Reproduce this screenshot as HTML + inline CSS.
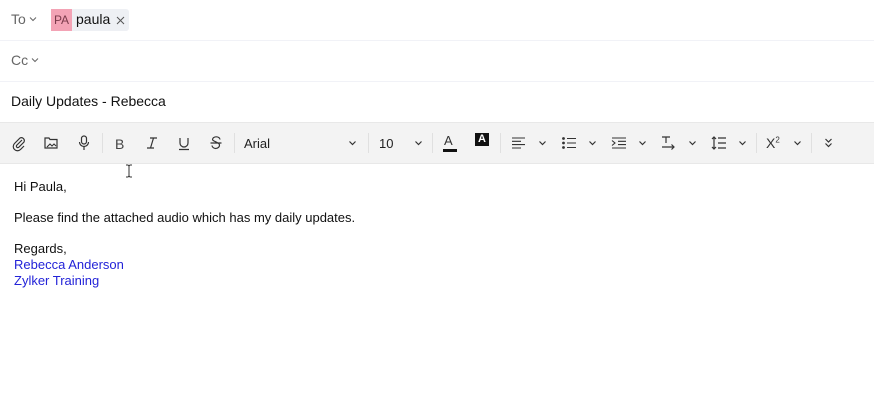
<!DOCTYPE html>
<html><head><meta charset="utf-8"><style>
*{margin:0;padding:0;box-sizing:border-box}
body{width:874px;height:420px;background:#fff;font-family:"Liberation Sans",Arial,sans-serif;position:relative;overflow:hidden;color:#222}
.a{position:absolute;white-space:nowrap}
.lbl{color:#666;font-size:14px}
.line{position:absolute;left:0;width:874px;height:1px;background:#f1f2f7}
.tb{position:absolute;left:0;top:122px;width:874px;height:42px;background:#f3f3f3;border-top:1px solid #e8e8e8;border-bottom:1px solid #e8e8e8}
.sep{position:absolute;top:133px;width:1px;height:20px;background:#e0e0e0}
svg{position:absolute;overflow:visible}
.body{font-size:13px;color:#111}
.blue{color:#2323d8}
</style></head><body>
<div class="a lbl" style="left:11px;top:11px">To</div>
<svg style="left:29px;top:16px" width="8" height="6"><path d="M1 1.5L4 4.5L7 1.5" fill="none" stroke="#666" stroke-width="1"/></svg>
<div class="a" style="left:51px;top:9px;width:78px;height:22px;background:#eef0f4;border-radius:3px"></div>
<div class="a" style="left:51px;top:9px;width:21px;height:22px;background:#f3a3b5;color:#7a3a4a;font-size:12px;line-height:22px;text-align:center">PA</div>
<div class="a" style="left:76px;top:11px;font-size:14px;color:#111">paula</div>
<svg style="left:116px;top:16px" width="9" height="9"><path d="M1 1L8 8M8 1L1 8" stroke="#555" stroke-width="1"/></svg>
<div class="line" style="top:40px"></div>
<div class="a lbl" style="left:11px;top:52px">Cc</div>
<svg style="left:31px;top:57px" width="8" height="6"><path d="M1 1.5L4 4.5L7 1.5" fill="none" stroke="#666" stroke-width="1"/></svg>
<div class="line" style="top:81px"></div>
<div class="a" style="left:11px;top:93px;font-size:14px;color:#111">Daily Updates - Rebecca</div>
<div class="tb"></div>
<svg style="left:12px;top:136px" width="14" height="14"><path d="M10 4L4.5 9.5a1.5 1.5 0 0 0 2 2L12 6a3 3 0 0 0-4-4L2.5 7.5a4.2 4.2 0 0 0 6 6L12 10" fill="none" stroke="#333" stroke-width="1.2"/></svg>
<svg style="left:44px;top:137px" width="14" height="12"><path d="M1 1h4l1 1.5h7V11H1z" fill="none" stroke="#333" stroke-width="1.2"/><path d="M3 10l3-3 2 2 2-2 2 2" fill="none" stroke="#333" stroke-width="1.1"/></svg>
<svg style="left:78px;top:135px" width="12" height="16"><rect x="3.5" y="1" width="5" height="8" rx="2.5" fill="none" stroke="#333" stroke-width="1.2"/><path d="M1.5 7a4.5 4.5 0 0 0 9 0M6 11.5V15" fill="none" stroke="#333" stroke-width="1.2"/></svg>
<div class="sep" style="left:102px"></div>
<div class="a" style="left:115px;top:136px;font-size:14px;color:#444">B</div>
<svg style="left:146px;top:137px" width="12" height="12"><path d="M4 1h7M1 11h7M7.5 1L4.5 11" fill="none" stroke="#333" stroke-width="1.2"/></svg>
<svg style="left:178px;top:137px" width="12" height="13"><path d="M2 1v5a4 4 0 0 0 8 0V1M1 12.5h10" fill="none" stroke="#333" stroke-width="1.2"/></svg>
<svg style="left:210px;top:136px" width="12" height="14"><path d="M10 3.5A3.5 2.5 0 0 0 2.5 3.5c0 2 7 2.5 7 5.5a3.5 3 0 0 1-7.5 0.5M0.5 7h11" fill="none" stroke="#333" stroke-width="1.2"/></svg>
<div class="sep" style="left:234px"></div>
<div class="a" style="left:244px;top:136px;font-size:13px;color:#222">Arial</div>
<svg style="left:349px;top:141px" width="7" height="5"><path d="M0.5 0.5L3.5 3.5L6.5 0.5" fill="none" stroke="#333" stroke-width="1.2"/></svg>
<div class="sep" style="left:368px"></div>
<div class="a" style="left:379px;top:136px;font-size:13px;color:#222">10</div>
<svg style="left:415px;top:141px" width="7" height="5"><path d="M0.5 0.5L3.5 3.5L6.5 0.5" fill="none" stroke="#333" stroke-width="1.2"/></svg>
<div class="sep" style="left:432px"></div>
<div class="a" style="left:444px;top:133px;font-size:13px;color:#333">A</div>
<div class="a" style="left:443px;top:149px;width:14px;height:3px;background:#111"></div>
<div class="a" style="left:475px;top:133px;width:14px;height:13px;background:#111;color:#fff;font-size:11px;font-weight:bold;text-align:center;line-height:13px">A</div>
<div class="sep" style="left:500px"></div>
<svg style="left:512px;top:137px" width="13" height="12"><path d="M0 1h13M0 4.3h9M0 7.6h13M0 11h9" stroke="#333" stroke-width="1.1"/></svg>
<svg style="left:539px;top:141px" width="7" height="5"><path d="M0.5 0.5L3.5 3.5L6.5 0.5" fill="none" stroke="#333" stroke-width="1.2"/></svg>
<svg style="left:562px;top:137px" width="14" height="12"><circle cx="1.5" cy="1.5" r="1.4" fill="#333"/><circle cx="1.5" cy="6" r="1.4" fill="#333"/><circle cx="1.5" cy="10.5" r="1.4" fill="#333"/><path d="M5 1.5h9M5 6h9M5 10.5h9" stroke="#333" stroke-width="1.1"/></svg>
<svg style="left:589px;top:141px" width="7" height="5"><path d="M0.5 0.5L3.5 3.5L6.5 0.5" fill="none" stroke="#333" stroke-width="1.2"/></svg>
<svg style="left:612px;top:137px" width="14" height="12"><path d="M0 1h14M6 4.3h8M6 7.6h8M0 11h14M0 3.5l3 2.5-3 2.5" fill="none" stroke="#333" stroke-width="1.1"/></svg>
<svg style="left:639px;top:141px" width="7" height="5"><path d="M0.5 0.5L3.5 3.5L6.5 0.5" fill="none" stroke="#333" stroke-width="1.2"/></svg>
<svg style="left:662px;top:136px" width="14" height="14"><path d="M0 1h8M4 1v6M0 11h12M9.5 8.5L12 11 9.5 13.5" fill="none" stroke="#333" stroke-width="1.2"/></svg>
<svg style="left:689px;top:141px" width="7" height="5"><path d="M0.5 0.5L3.5 3.5L6.5 0.5" fill="none" stroke="#333" stroke-width="1.2"/></svg>
<svg style="left:711px;top:136px" width="15" height="14"><path d="M3 1v12M1 3l2-2 2 2M1 11l2 2 2-2M7 2h8M7 7h8M7 12h8" fill="none" stroke="#333" stroke-width="1.2"/></svg>
<svg style="left:739px;top:141px" width="7" height="5"><path d="M0.5 0.5L3.5 3.5L6.5 0.5" fill="none" stroke="#333" stroke-width="1.2"/></svg>
<div class="sep" style="left:756px"></div>
<div class="a" style="left:766px;top:135px;font-size:14px;color:#333">X<sup style="font-size:8px">2</sup></div>
<svg style="left:794px;top:141px" width="7" height="5"><path d="M0.5 0.5L3.5 3.5L6.5 0.5" fill="none" stroke="#333" stroke-width="1.2"/></svg>
<div class="sep" style="left:811px"></div>
<svg style="left:825px;top:138px" width="7" height="10"><path d="M0.5 1L3.5 4L6.5 1M0.5 5.5L3.5 8.5L6.5 5.5" fill="none" stroke="#333" stroke-width="1.2"/></svg>
<svg style="left:125px;top:164px" width="8" height="14"><path d="M1 1h2l1 1 1-1h2M4 2v10M1 13h2l1-1 1 1h2" fill="none" stroke="#333" stroke-width="1"/></svg>
<div class="a body" style="left:14px;top:179px">Hi Paula,</div>
<div class="a body" style="left:14px;top:210px">Please find the attached audio which has my daily updates.</div>
<div class="a body" style="left:14px;top:241px">Regards,</div>
<div class="a body blue" style="left:14px;top:257px">Rebecca Anderson</div>
<div class="a body blue" style="left:14px;top:273px">Zylker Training</div>
</body></html>
